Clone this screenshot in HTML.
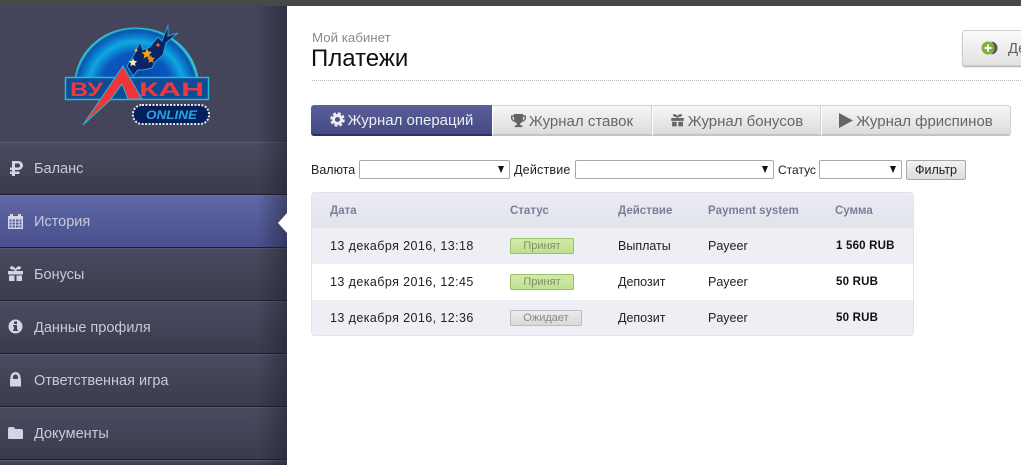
<!DOCTYPE html>
<html lang="ru">
<head>
<meta charset="utf-8">
<title>Платежи</title>
<style>
html,body{margin:0;padding:0;width:1021px;height:465px;overflow:hidden;background:#fff;font-family:"Liberation Sans","DejaVu Sans",sans-serif;color:#222}
*{box-sizing:border-box}
.abs{position:absolute}
#top{left:0;top:0;width:1021px;height:6px;background:#484848}
#side{left:0;top:6px;width:287px;height:459px;background:#44445a;overflow:hidden}
#side:after{content:"";position:absolute;right:0;top:0;width:30px;height:100%;background:linear-gradient(90deg,rgba(30,30,45,0),rgba(30,30,45,.5));pointer-events:none}
.nav{position:absolute;left:0;width:287px;height:53px;background:linear-gradient(#4a4b60,#3b3b4e);border-top:1px solid #5a5a75;border-bottom:1px solid #1d1d2b}
.nav.on{background:linear-gradient(#6068a6,#494f8d);border-top-color:#6a70ae}
.nav span{position:absolute;left:34px;top:17px;font-size:14.5px;line-height:18px;color:#c9c9da;white-space:nowrap}
.nav svg{position:absolute;left:7px;top:16px;width:17px;height:18px;fill:#d4d4e4}
#arrow{left:278px;top:213px;width:0;height:0;border-top:10px solid transparent;border-bottom:10px solid transparent;border-right:9px solid #fff;z-index:3}
#crumb{left:312px;top:30px;font-size:13.3px;line-height:16px;color:#8a8a8a}
#h1{left:311px;top:45px;font-size:24px;line-height:28px;color:#111}
#dots{left:312px;top:80px;width:709px;border-top:1px dotted #bbb}
#dep{left:962px;top:30px;width:59px;height:36px;border:1px solid #cfcfcf;border-right:0;border-radius:3px 0 0 3px;background:linear-gradient(#fafafa,#e2e2e2);box-shadow:0 1px 1px #aaa;overflow:hidden}
#dep b{position:absolute;left:45px;top:9px;font-weight:normal;font-size:15px;line-height:18px;color:#666}
#dep svg{position:absolute;left:18px;top:8px}
.tab{position:absolute;top:105px;height:31px;background:linear-gradient(#f6f6f6,#dcdcdc);border:1px solid #d2d2d2;border-left:1px solid #fff;border-bottom:2px solid #c4c4c4;font-size:15px;line-height:31px;color:#666;text-align:center;white-space:nowrap}
.tab svg{vertical-align:-2px;margin-right:3px}
.tab.on{background:linear-gradient(#5a5f9c,#454a84);border:0;border-bottom:2px solid #2d3060;color:#eee;border-radius:3px 0 0 3px;line-height:31px}
.lab{position:absolute;top:163px;font-size:12.5px;line-height:15px;color:#222}
.sel{position:absolute;top:160px;height:19px;border:1px solid #a9a9a9;border-radius:2px;background:#fff}
.sel:after{content:"";position:absolute;right:5px;top:5px;border-left:3.500px solid transparent;border-right:3.500px solid transparent;border-top:7px solid #111}
#flt{left:906px;top:160px;width:60px;height:20px;border:1px solid #aaa;border-radius:2px;background:linear-gradient(#f2f2f2,#dcdcdc);font-size:12.5px;line-height:18px;text-align:center;color:#222}
#tbl{left:311px;top:192px;width:603px;height:144px;border:1px solid #e2e2e8;border-radius:4px;overflow:hidden;background:#fff}
.r{position:absolute;left:0;width:602px;height:36px}
.r div{position:absolute;top:0;line-height:36px;font-size:12.5px;color:#222;white-space:nowrap}
.r div.d{letter-spacing:.42px}
.r div.c5{line-height:34px}
.head{top:0;height:35px;background:linear-gradient(#ecedf3,#e1e2ea)}
.r.head div{font-weight:bold;color:#7d7d98;font-size:11.500px;line-height:36px}
.alt{background:#eeeef5}
.c1{left:18px}.c2{left:198px}.c3{left:306px}.c4{left:396px}.c5{left:524px}
.c5 b{font-size:11.5px;color:#111;letter-spacing:.2px}
.r .badge{top:10px;height:16px;line-height:14px;font-size:11px;text-align:center;border-radius:2px;border:1px solid #9cc06c;background:linear-gradient(#d2eba8,#bfe08d);color:#7e8f6a;width:64px}
.r .badge.g{border-color:#bdbdbd;background:linear-gradient(#ececec,#d9d9d9);color:#8a8a8a;width:72px}
</style>
</head>
<body>
<div class="abs" id="top"></div>
<div class="abs" id="side">
  <svg class="abs" style="left:60px;top:14px" width="160" height="112" viewBox="60 20 160 112">
    <defs>
      <radialGradient id="dome" cx="136" cy="90" r="62" gradientUnits="userSpaceOnUse">
        <stop offset="0" stop-color="#0a3c9a"/><stop offset=".6" stop-color="#0a59c0"/><stop offset=".78" stop-color="#0fa8e0"/><stop offset=".88" stop-color="#0a78cc"/><stop offset=".97" stop-color="#0a55a8"/><stop offset="1" stop-color="#30c0d8"/>
      </radialGradient>
    </defs>
    <path d="M75 78C80 48 105 28 136 28c31 0 57 20 62 50z" fill="url(#dome)" stroke="#30c0d8" stroke-width="1"/>
    <path d="M127 66l8-13 5-11 3 8 7-3 8-10 4 4 6-16v11l10-3-12 10-3 12-8 7-3 6-9 2h-5l-5 6z" fill="#0b2468" stroke="#25a5cf" stroke-width="1"/>
    <path d="M147 48l1.500 3.500 3.500.5-2.500 2.500.5 4-3-2-3.500 2 1-3.500-3-2.500 4-.5z" fill="#f2a51f"/>
    <path d="M151 55l1 2.500 3 .5-2 2 .5 3-2.500-1.500-2.500 1.500.5-3-2-2 3-.5z" fill="#e8892a"/>
    <path d="M133 58l1.200 2.800 3 .4-2.200 2 .5 3-2.500-1.500-2.500 1.500.5-3-2.200-2 3-.4z" fill="#f4eebc"/>
    <rect x="156.500" y="43.500" width="3" height="3" fill="#e8602a" transform="rotate(45 158 45)"/>
    <rect x="135" y="49" width="2.500" height="2.500" fill="#f0b030" transform="rotate(45 136 50)"/>
    <rect x="65.500" y="77.500" width="143" height="22" fill="#0e4c96" stroke="#2ab8d4" stroke-width="1.500"/>
    <path d="M83 125L123 66l19 33h-14l-6-15-12 16z" fill="#f0353a" stroke="#2ab8d4" stroke-width="1"/>
    <text x="70" y="96" font-family="Liberation Sans,sans-serif" font-weight="bold" font-size="19" fill="#f0393f" textLength="33" lengthAdjust="spacingAndGlyphs">ВУ</text>
    <text x="139" y="96" font-family="Liberation Sans,sans-serif" font-weight="bold" font-size="19" fill="#f0393f" textLength="65" lengthAdjust="spacingAndGlyphs">КАН</text>
    <rect x="133" y="105" width="76" height="19" rx="9" fill="#04205a" stroke="#dfe9f5" stroke-width="2" stroke-dasharray="2 1.500"/>
    <text x="146" y="119" font-family="Liberation Sans,sans-serif" font-weight="bold" font-style="italic" font-size="12" fill="#2ea3e4" textLength="51" lengthAdjust="spacingAndGlyphs">ONLINE</text>
  </svg>

  <div class="nav" style="top:136px"><svg viewBox="0 0 17 18"><path fill-rule="evenodd" d="M5 2h6.500a4.500 4.500 0 0 1 0 9H8v1.500h4.500V15H8v2H5v-2H3v-2.500h2V11H3V8.500h2zM8 4.500v4h3a2 2 0 0 0 0-4z"/></svg><span>Баланс</span></div>
  <div class="nav on" style="top:189px"><svg viewBox="0 0 17 18"><path d="M1 4h2V2h3v2h5V2h3v2h2v13H1zM2.500 7.500v2h2v-2zm3 0v2h2.500v-2zm3.500 0v2h2.500v-2zm3.500 0v2h2v-2zm-10 3v2h2v-2zm3 0v2h2.500v-2zm3.500 0v2h2.500v-2zm3.500 0v2h2v-2zm-10 3v2h2v-2zm3 0v2h2.500v-2zm3.500 0v2h2.500v-2zm3.500 0v2h2v-2z"/></svg><span>История</span></div>
  <div class="nav" style="top:242px"><svg viewBox="0 0 17 18"><path d="M1 6h6.500V4.500C5 5 3 4 3 2.700 3 1.500 5 1 6 1.500 7.500 2 8.500 3.500 8.500 4c0-.5 1-2 2.500-2.500 1-.5 3 0 3 1.200 0 1.300-2 2.300-4.500 1.800V6H16v3.500H1zM2 10.500h5.500V16H2zm7.500 0H15V16H9.500z"/></svg><span>Бонусы</span></div>
  <div class="nav" style="top:295px"><svg viewBox="0 0 17 18"><path fill-rule="evenodd" d="M8.500 1.500a7 7 0 1 1 0 14 7 7 0 0 1 0-14zM7 3.500v2.500h3V3.500zM6 7v1.500h1v3H6V13h5v-1.500h-1V7z"/></svg><span>Данные профиля</span></div>
  <div class="nav" style="top:348px"><svg viewBox="0 0 17 18"><path fill-rule="evenodd" d="M3.500 8V6a5 5 0 0 1 10 0v2h.5v7.500H3V8zM6 8h5V6a2.500 2.500 0 0 0-5 0z"/></svg><span>Ответственная игра</span></div>
  <div class="nav" style="top:401px"><svg viewBox="0 0 17 18"><path d="M1 5a2 2 0 0 1 2-2h3.500l2 2H14a2 2 0 0 1 2 2v7a1 1 0 0 1-1 1H2a1 1 0 0 1-1-1z"/></svg><span>Документы</span></div>
  <div class="nav" style="top:454px;height:5px;border-bottom:0"></div>
</div>
<div class="abs" id="arrow"></div>

<div class="abs" id="crumb">Мой кабинет</div>
<div class="abs" id="h1">Платежи</div>
<div class="abs" id="dots"></div>

<div class="abs" id="dep">
  <svg width="18" height="18" viewBox="0 0 18 18"><path d="M10 2.500a6.500 6.500 0 0 1 0 13 8 8 0 0 0 3-6.500 8 8 0 0 0-3-6.500z" fill="#555"/><circle cx="7" cy="9" r="6.500" fill="#7cb23a"/><path d="M6 5.500h2V8h2.500v2H8v2.500H6V10H3.500V8H6z" fill="#fff"/></svg>
  <b>Де</b>
</div>

<div class="tab on" style="left:311px;width:181px"><svg width="15" height="15" viewBox="0 0 16 16"><circle cx="8" cy="8" r="4.200" fill="none" stroke="#eee" stroke-width="3"/><circle cx="8" cy="8" r="6.600" fill="none" stroke="#eee" stroke-width="2.400" stroke-dasharray="3.200 2"/></svg>Журнал операций</div>
<div class="tab" style="left:492px;width:160px"><svg width="15" height="15" viewBox="0 0 16 16"><path fill="#666" fill-rule="evenodd" d="M3 1h10v1.500h3V5c0 2.500-2 4-4 4.300-.6.900-1.400 1.500-2.200 1.800V13H12v2H4v-2h2.200v-1.900C5.400 10.800 4.600 10.200 4 9.300 2 9 0 7.500 0 5V2.500h3zM1.500 4v1c0 1.200.8 2.200 2 2.700C3.200 6.500 3 5.300 3 4zm11.500 0c0 1.300-.2 2.500-.5 3.700 1.200-.5 2-1.500 2-2.700V4z"/></svg>Журнал ставок</div>
<div class="tab" style="left:652px;width:169px"><svg width="15" height="15" viewBox="0 0 17 18"><path fill="#666" d="M1 6h6.500V4.500C5 5 3 4 3 2.700 3 1.500 5 1 6 1.500 7.500 2 8.500 3.500 8.500 4c0-.5 1-2 2.500-2.500 1-.5 3 0 3 1.200 0 1.300-2 2.300-4.500 1.800V6H16v3.500H1zM2 10.500h5.500V16H2zm7.500 0H15V16H9.500z"/></svg>Журнал бонусов</div>
<div class="tab" style="left:821px;width:190px;border-radius:0 3px 3px 0"><svg width="14" height="15" viewBox="0 0 14 15"><path fill="#666" d="M0 0l14 7.500L0 15z"/></svg>Журнал фриспинов</div>

<div class="lab" style="left:311px">Валюта</div>
<div class="sel" style="left:359px;width:151px"></div>
<div class="lab" style="left:514px;letter-spacing:.2px">Действие</div>
<div class="sel" style="left:575px;width:199px"></div>
<div class="lab" style="left:778px;font-size:12px">Статус</div>
<div class="sel" style="left:819px;width:83px"></div>
<div class="abs" id="flt">Фильтр</div>

<div class="abs" id="tbl">
  <div class="r head"><div class="c1">Дата</div><div class="c2">Статус</div><div class="c3">Действие</div><div class="c4">Payment system</div><div class="c5" style="left:523px">Сумма</div></div>
  <div class="r alt" style="top:35px"><div class="c1 d">13 декабря 2016, 13:18</div><div class="c2 badge">Принят</div><div class="c3">Выплаты</div><div class="c4">Payeer</div><div class="c5"><b>1 560 RUB</b></div></div>
  <div class="r" style="top:71px"><div class="c1 d">13 декабря 2016, 12:45</div><div class="c2 badge">Принят</div><div class="c3">Депозит</div><div class="c4">Payeer</div><div class="c5"><b>50 RUB</b></div></div>
  <div class="r alt" style="top:107px"><div class="c1 d">13 декабря 2016, 12:36</div><div class="c2 badge g">Ожидает</div><div class="c3">Депозит</div><div class="c4">Payeer</div><div class="c5"><b>50 RUB</b></div></div>
</div>
</body>
</html>
